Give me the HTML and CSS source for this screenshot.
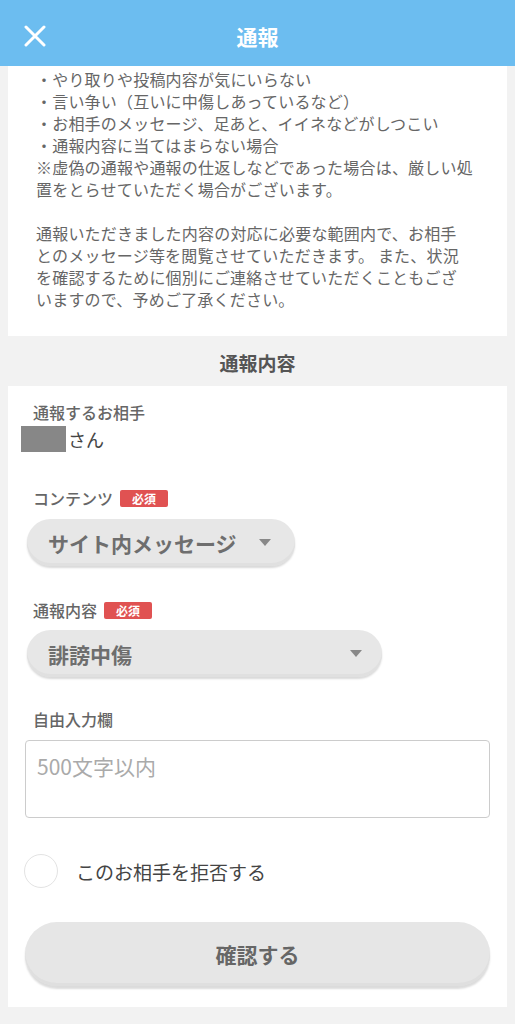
FILE: index.html
```html
<!DOCTYPE html>
<html>
<head>
	<meta charset="utf-8">
	<title>通報</title>

	<link rel="stylesheet" href="styles.css">

</head>
<body>

	<div class="header">
		<span class="close">
			<svg width="22" height="22" viewBox="0 0 22 22"><path d="M2 2 L20 20 M20 2 L2 20" stroke="#fff" stroke-width="3" stroke-linecap="round"/></svg>
		</span>
		<h1 class="title">通報</h1>
	</div>

	<div class="card notice">
		<p>・やり取りや投稿内容が気にいらない<br>
		・言い争い（互いに中傷しあっているなど）<br>
		・お相手のメッセージ、足あと、イイネなどがしつこい<br>
		・通報内容に当てはまらない場合<br>
		※虚偽の通報や通報の仕返しなどであった場合は、厳しい処置をとらせていただく場合がございます。</p>
		<p>通報いただきました内容の対応に必要な範囲内で、お相手<br>とのメッセージ等を閲覧させていただきます。 また、状況<br>を確認するために個別にご連絡させていただくこともござ<br>いますので、予めご了承ください。</p>
	</div>

	<h2 class="section">通報内容</h2>

	<div class="card form">
		<div class="label">通報するお相手</div>
		<div class="target"><span class="masked"></span>さん</div>

		<div class="label first">コンテンツ<span class="badge">必須</span></div>
		<div class="select">サイト内メッセージ<span class="caret"></span></div>

		<div class="label next">通報内容<span class="badge">必須</span></div>
		<div class="select wide">誹謗中傷<span class="caret"></span></div>

		<div class="label last">自由入力欄</div>
		<textarea class="free" placeholder="500文字以内"></textarea>

		<label class="block">
			<span class="radio"></span>
			このお相手を拒否する
		</label>

		<button class="submit">確認する</button>
	</div>

</body>
</html>
```

FILE: styles.css
```css
body{
	margin: 0;
	background: #f2f2f2;
	font-family: "Noto Sans CJK JP", "Noto Sans", sans-serif;
	color: #666;
}

.header{
	height: 66px;
	background: #6cbdf0;
	display: flex;
	align-items: center;
	justify-content: center;
	position: relative;
}

.close{
	position: absolute;
	left: 24px;
	top: 25px;
	display: flex;
}

.title{
	margin: 0;
	color: #fff;
	font-size: 21px;
	font-weight: bold;
	line-height: 1;
	margin-top: 6px;
}

.card{
	background: #fff;
	margin: 0 8px;
}

.notice{
	padding: 2px 20px 26px 28px;
	font-size: 16px;
	letter-spacing: 0.2px;
	line-height: 22px;
}

.notice p{
	margin: 0;
}

.notice p + p{
	margin-top: 22px;
}

.section{
	margin: 0;
	height: 50px;
	display: flex;
	align-items: center;
	justify-content: center;
	font-size: 19px;
	font-weight: bold;
	color: #555;
	padding-top: 2px;
	box-sizing: border-box;
}

.form{
	padding: 15px 17px 17px 17px;
	display: flex;
	flex-direction: column;
	align-items: flex-start;
}

.label{
	padding-left: 8px;
	font-size: 16px;
	line-height: 22px;
	font-weight: 500;
	color: #666;
	display: flex;
	align-items: center;
}

.label.first{
	margin-top: 35px;
}

.label.next{
	margin-top: 33px;
}

.label.last{
	margin-top: 31px;
}

.badge{
	margin-left: 7px;
	background: #e05252;
	color: #fff;
	font-size: 12px;
	font-weight: bold;
	line-height: 17px;
	padding: 0 12px;
	border-radius: 2px;
}

.target{
	margin-top: 3px;
	margin-left: -4px;
	display: flex;
	align-items: center;
	font-size: 18px;
	color: #444;
	height: 26px;
}

.masked{
	width: 45px;
	height: 26px;
	background: #878787;
	margin-right: 2px;
}

.select{
	margin-top: 10px;
	margin-left: 2px;
	height: 47px;
	box-sizing: border-box;
	padding: 0 24px 0 21px;
	border-radius: 24px;
	background: #e7e7e7;
	box-shadow: 0 2px 2px rgba(0,0,0,.15), inset 0 -3px 0 #e0e0e0;
	display: flex;
	align-items: center;
	font-size: 21px;
	font-weight: bold;
	color: #6e6e6e;
}

.select.wide{
	width: 355px;
	justify-content: space-between;
	margin-top: 9px;
	padding-right: 20px;
}

.caret{
	margin-left: 22px;
	width: 0;
	height: 0;
	border-left: 6px solid transparent;
	border-right: 6px solid transparent;
	border-top: 7px solid #888;
}

.free{
	margin-top: 10px;
	width: 465px;
	height: 78px;
	box-sizing: border-box;
	border: 1px solid #ccc;
	border-radius: 4px;
	padding: 10px 11px;
	resize: none;
	font-family: inherit;
	font-size: 21px;
	color: #444;
}

.free::placeholder{
	color: #aaa;
}

.block{
	margin-top: 36px;
	margin-left: -1px;
	display: flex;
	align-items: center;
	font-size: 19px;
	color: #444;
	height: 34px;
}

.radio{
	width: 34px;
	height: 34px;
	box-sizing: border-box;
	border: 1px solid #e3e3e3;
	border-radius: 50%;
	margin-right: 18px;
}

.submit{
	margin-top: 34px;
	width: 465px;
	height: 64px;
	border: none;
	border-radius: 32px;
	background: #e6e6e6;
	box-shadow: 0 3px 2px rgba(0,0,0,.14), inset 0 -3px 0 #dfdfdf;
	font-family: inherit;
	font-size: 21px;
	font-weight: bold;
	color: #666;
	margin-bottom: 4px;
}
```
